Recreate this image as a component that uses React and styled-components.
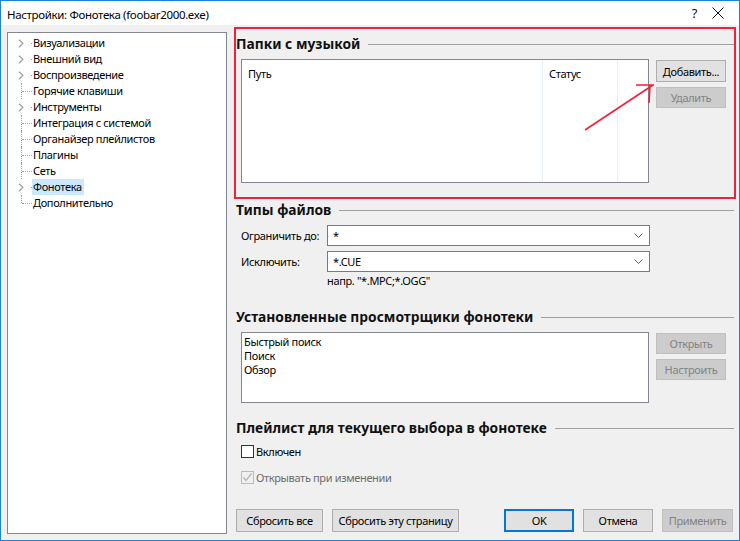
import React from "react";
import styled, { createGlobalStyle } from "styled-components";

const GlobalStyle = createGlobalStyle`
  html, body {
    margin: 0;
    padding: 0;
    background: #ffffff;
  }
  body {
    font-family: "Noto Sans", "Liberation Sans", sans-serif;
    font-size: 11px;
    letter-spacing: -0.35px;
    color: #000;
  }
`;

const Window = styled.div`
  position: relative;
  width: 740px;
  height: 541px;
  box-sizing: border-box;
  border: 1px solid #1883d7;
  background: #f0f0f0;
  display: flex;
  flex-direction: column;
  overflow: hidden;
`;

const TitleBar = styled.div`
  height: 24px;
  background: #ffffff;
  display: flex;
  align-items: center;
  padding-left: 6px;
  flex-shrink: 0;
`;

const TitleText = styled.div`
  flex: 1;
  font-size: 11.5px;
  padding-top: 2px;
`;

const TitleButton = styled.div`
  width: 23px;
  height: 24px;
  display: flex;
  align-items: center;
  justify-content: center;
  font-size: 13px;
  color: #111;
`;

const Body = styled.div`
  flex: 1;
  display: flex;
  gap: 9px;
  padding: 7px 5px 6px 6px;
  min-height: 0;
`;

const Tree = styled.div`
  width: 220px;
  box-sizing: border-box;
  background: #ffffff;
  border: 1px solid #828790;
  padding-top: 2px;
  flex-shrink: 0;
`;

const TreeRow = styled.div`
  position: relative;
  height: 16px;
  display: flex;
  align-items: center;
`;

const Connector = styled.div`
  position: relative;
  width: 24px;
  height: 16px;
  flex-shrink: 0;

  &::before {
    content: "";
    display: ${({ $leaf }) => ($leaf ? "block" : "none")};
    position: absolute;
    left: 13px;
    top: 0;
    height: ${({ $last }) => ($last ? "8px" : "16px")};
    border-left: 1px dotted #a0a0a0;
  }

  &::after {
    content: "";
    position: absolute;
    left: ${({ $leaf }) => ($leaf ? "14px" : "23px")};
    right: 0;
    top: 8px;
    border-top: 1px dotted #a0a0a0;
  }
`;

const Chevron = styled.svg`
  position: absolute;
  left: 10px;
  top: 4px;
`;

const TreeLabel = styled.span`
  padding: 0 2px 0 1px;
  height: 16px;
  line-height: 16px;
  background: ${({ $selected }) => ($selected ? "#cce8ff" : "transparent")};
  white-space: nowrap;
`;

const Content = styled.div`
  flex: 1;
  display: flex;
  flex-direction: column;
  min-width: 0;
  padding-bottom: 2px;
`;

const Heading = styled.div`
  display: flex;
  align-items: center;
  height: 18px;
  margin-top: ${({ $mt }) => $mt}px;
  font-size: 13.8px;
  font-weight: 700;
  letter-spacing: 0;
  color: #111;
  white-space: nowrap;

  &::after {
    content: "";
    flex: 1;
    height: 1px;
    margin-left: 8px;
    margin-top: 2px;
    background: #a0a0a0;
  }
`;

const ListRow = styled.div`
  display: flex;
  gap: 7px;
  margin-top: 7px;
  padding-left: 5px;
`;

const ListBox = styled.div`
  width: 408px;
  height: ${({ $h }) => $h}px;
  box-sizing: border-box;
  background: #ffffff;
  border: 1px solid #828790;
  flex-shrink: 0;
  display: flex;
  flex-direction: column;
`;

const ColumnsWrap = styled.div`
  flex: 1;
  display: flex;
`;

const Column = styled.div`
  width: ${({ $w }) => ($w ? `${$w}px` : "auto")};
  flex: ${({ $w }) => ($w ? "none" : 1)};
  border-right: ${({ $sep }) => ($sep ? "1px solid #e7eef7" : "none")};
  padding: 6px 0 0 6px;
  box-sizing: border-box;
`;

const ListItem = styled.div`
  line-height: 14px;
  padding-left: 2px;
`;

const Items = styled.div`
  padding-top: 2px;
`;

const SideButtons = styled.div`
  display: flex;
  flex-direction: column;
  gap: 5px;
  padding-top: 1px;
`;

const Button = styled.div`
  width: ${({ $w }) => $w || 70}px;
  height: ${({ $h }) => $h || 21}px;
  box-sizing: border-box;
  display: flex;
  align-items: center;
  justify-content: center;
  background: ${({ $disabled }) => ($disabled ? "#cccccc" : "#e1e1e1")};
  border: ${({ $default }) => ($default ? "2px solid #0078d7" : "1px solid")};
  border-color: ${({ $default, $disabled }) =>
    $default ? "#0078d7" : $disabled ? "#bfbfbf" : "#adadad"};
  color: ${({ $disabled }) => ($disabled ? "#838383" : "#000")};
  white-space: nowrap;
`;

const FieldRow = styled.div`
  display: flex;
  align-items: center;
  margin-top: ${({ $mt }) => $mt}px;
  padding-left: 5px;
`;

const FieldLabel = styled.div`
  width: 86px;
  flex-shrink: 0;
`;

const Combo = styled.div`
  width: 323px;
  height: 21px;
  box-sizing: border-box;
  background: #ffffff;
  border: 1px solid #7a7a7a;
  display: flex;
  align-items: center;
  justify-content: space-between;
  padding: 0 6px 0 5px;
`;

const Hint = styled.div`
  margin-top: 2px;
  height: 14px;
  line-height: 14px;
  padding-left: 91px;
`;

const CheckRow = styled.div`
  display: flex;
  align-items: center;
  height: 16px;
  margin-top: ${({ $mt }) => $mt}px;
  padding-left: 5px;
  gap: 2px;
  color: ${({ $disabled }) => ($disabled ? "#6d6d6d" : "#000")};
`;

const Box = styled.div`
  width: 13px;
  height: 13px;
  box-sizing: border-box;
  background: ${({ $disabled }) => ($disabled ? "#f0f0f0" : "#ffffff")};
  border: 1px solid ${({ $disabled }) => ($disabled ? "#bcbcbc" : "#333333")};
  display: flex;
  align-items: center;
  justify-content: center;
`;

const Footer = styled.div`
  margin-top: auto;
  display: flex;
  justify-content: space-between;
  padding-right: 1px;
`;

const ButtonGroup = styled.div`
  display: flex;
  gap: 9px;
`;

const Highlight = styled.div`
  position: absolute;
  left: 233px;
  top: 26px;
  width: 502px;
  height: 172px;
  box-sizing: border-box;
  border: 2px solid #f0213a;
  pointer-events: none;
`;

const ArrowMark = styled.svg`
  position: absolute;
  left: 0;
  top: 0;
  pointer-events: none;
`;

const treeItems = [
  { label: "Визуализации", children: true },
  { label: "Внешний вид", children: true },
  { label: "Воспроизведение", children: true },
  { label: "Горячие клавиши" },
  { label: "Инструменты", children: true },
  { label: "Интеграция с системой" },
  { label: "Органайзер плейлистов" },
  { label: "Плагины" },
  { label: "Сеть" },
  { label: "Фонотека", children: true, selected: true },
  { label: "Дополнительно", last: true },
];

const ChevronDown = () => (
  <svg width="9" height="5" viewBox="0 0 9 5">
    <polyline points="0.5,0.5 4.5,4.5 8.5,0.5" fill="none" stroke="#606060" strokeWidth="1" />
  </svg>
);

const Check = ({ color }) => (
  <svg width="11" height="11" viewBox="0 0 11 11">
    <polyline points="1.5,5.5 4,8.5 9.5,1.5" fill="none" stroke={color} strokeWidth="1.3" />
  </svg>
);

export default function App() {
  return (
    <>
      <GlobalStyle />
      <Window>
        <TitleBar>
          <TitleText>Настройки: Фонотека (foobar2000.exe)</TitleText>
          <TitleButton>?</TitleButton>
          <TitleButton style={{ marginRight: 10 }}>
            <svg width="12" height="12" viewBox="0 0 12 12">
              <path d="M0.5 0.5 L11.5 11.5 M11.5 0.5 L0.5 11.5" stroke="#111" strokeWidth="1" />
            </svg>
          </TitleButton>
        </TitleBar>
        <Body>
          <Tree>
            {treeItems.map((item) => (
              <TreeRow key={item.label}>
                <Connector $leaf={!item.children} $last={item.last}>
                  {item.children && (
                    <Chevron width="6" height="9" viewBox="0 0 6 9">
                      <polyline points="1,0.8 4.8,4.5 1,8.2" fill="none" stroke="#a6a6a6" strokeWidth="1.4" />
                    </Chevron>
                  )}
                </Connector>
                <TreeLabel $selected={item.selected}>{item.label}</TreeLabel>
              </TreeRow>
            ))}
          </Tree>
          <Content>
            <Heading $mt={2}>Папки с музыкой</Heading>
            <ListRow>
              <ListBox $h={124}>
                <ColumnsWrap>
                  <Column $w={301} $sep>Путь</Column>
                  <Column $w={75} $sep>Статус</Column>
                  <Column />
                </ColumnsWrap>
              </ListBox>
              <SideButtons>
                <Button $h={22}>Добавить...</Button>
                <Button $disabled>Удалить</Button>
              </SideButtons>
            </ListRow>

            <Heading $mt={17}>Типы файлов</Heading>
            <FieldRow $mt={7}>
              <FieldLabel>Ограничить до:</FieldLabel>
              <Combo>
                <span>*</span>
                <ChevronDown />
              </Combo>
            </FieldRow>
            <FieldRow $mt={5}>
              <FieldLabel>Исключить:</FieldLabel>
              <Combo>
                <span>*.CUE</span>
                <ChevronDown />
              </Combo>
            </FieldRow>
            <Hint>напр. "*.MPC;*.OGG"</Hint>

            <Heading $mt={19}>Установленные просмотрщики фонотеки</Heading>
            <ListRow>
              <ListBox $h={71}>
                <Items>
                  <ListItem>Быстрый поиск</ListItem>
                  <ListItem>Поиск</ListItem>
                  <ListItem>Обзор</ListItem>
                </Items>
              </ListBox>
              <SideButtons>
                <Button $disabled>Открыть</Button>
                <Button $disabled>Настроить</Button>
              </SideButtons>
            </ListRow>

            <Heading $mt={15}>Плейлист для текущего выбора в фонотеке</Heading>
            <CheckRow $mt={7}>
              <Box />
              <span>Включен</span>
            </CheckRow>
            <CheckRow $mt={10} $disabled>
              <Box $disabled>
                <Check color="#b5b5b5" />
              </Box>
              <span>Открывать при изменении</span>
            </CheckRow>

            <Footer>
              <ButtonGroup>
                <Button $w={87} $h={23}>Сбросить все</Button>
                <Button $w={127} $h={23}>Сбросить эту страницу</Button>
              </ButtonGroup>
              <ButtonGroup>
                <Button $w={70} $h={23} $default>OK</Button>
                <Button $w={70} $h={23}>Отмена</Button>
                <Button $w={71} $h={23} $disabled>Применить</Button>
              </ButtonGroup>
            </Footer>
          </Content>
        </Body>

        <Highlight />
        <ArrowMark width="740" height="541" viewBox="0 0 740 541">
          <path
            d="M584 129 L652 84 M635 84 L653 84 M649 84 L648 102"
            fill="none"
            stroke="#f0213a"
            strokeWidth="1.6"
          />
        </ArrowMark>
      </Window>
    </>
  );
}
